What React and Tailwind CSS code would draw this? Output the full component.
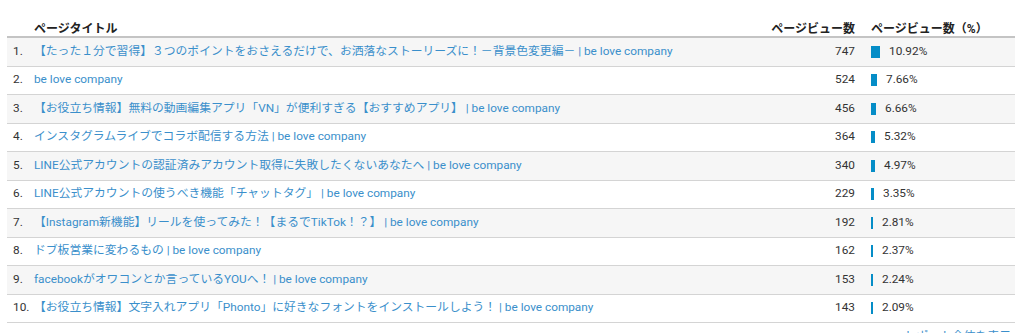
import React from 'react';

const rows = [
  { title: '【たった１分で習得】３つのポイントをおさえるだけで、お洒落なストーリーズに！－背景色変更編－ | be love company', views: 747, pct: 10.92 },
  { title: 'be love company', views: 524, pct: 7.66 },
  { title: '【お役立ち情報】無料の動画編集アプリ「VN」が便利すぎる【おすすめアプリ】 | be love company', views: 456, pct: 6.66 },
  { title: 'インスタグラムライブでコラボ配信する方法 | be love company', views: 364, pct: 5.32 },
  { title: 'LINE公式アカウントの認証済みアカウント取得に失敗したくないあなたへ | be love company', views: 340, pct: 4.97 },
  { title: 'LINE公式アカウントの使うべき機能「チャットタグ」 | be love company', views: 229, pct: 3.35 },
  { title: '【Instagram新機能】リールを使ってみた！【まるでTikTok！？】 | be love company', views: 192, pct: 2.81 },
  { title: 'ドブ板営業に変わるもの | be love company', views: 162, pct: 2.37 },
  { title: 'facebookがオワコンとか言っているYOUへ！ | be love company', views: 153, pct: 2.24 },
  { title: '【お役立ち情報】文字入れアプリ「Phonto」に好きなフォントをインストールしよう！ | be love company', views: 143, pct: 2.09 },
];

const font = { fontFamily: "Roboto, 'Noto Sans CJK JP', sans-serif" };

export default function App() {
  return (
    <div className="bg-white w-[1024px] h-[333px] overflow-hidden" style={font}>
      <div className="ml-[7px] w-[1008px] pt-[18px]">
        <div className="flex items-center pt-[4px] h-[20px] border-b-2 border-[#c4c4c4] text-[12px] font-bold text-[#222]">
          <div className="w-[27px]" />
          <div className="flex-1">ページタイトル</div>
          <div className="w-[100px] text-right">ページビュー数</div>
          <div className="w-[160px] pl-[16px]">ページビュー数（%）</div>
        </div>
        {rows.map((r, i) => (
          <div
            key={i}
            className={`flex items-center h-[28.5px] border-b border-[#d4d4d4] text-[11.8px] ${i % 2 === 0 ? 'bg-[#f6f6f6]' : 'bg-white'}`}
          >
            <div className="w-[27px] pl-[6px] text-[#333]">{i + 1}.</div>
            <div className="flex-1 text-[#3a8fcb] whitespace-nowrap">{r.title}</div>
            <div className="w-[100px] text-right text-[#333]">{r.views}</div>
            <div className="w-[160px] pl-[16px] flex items-center text-[#333]">
              <div className="h-[12px] bg-[#058dc7]" style={{ width: Math.max(2, Math.round(r.pct * 0.82)) + 'px' }} />
              <span className="ml-[9px]">{r.pct.toFixed(2)}%</span>
            </div>
          </div>
        ))}
        <div className="flex justify-end pr-[4px] pt-[5px] text-[11.8px] text-[#3a8fcb]">レポート全体を表示</div>
      </div>
    </div>
  );
}
